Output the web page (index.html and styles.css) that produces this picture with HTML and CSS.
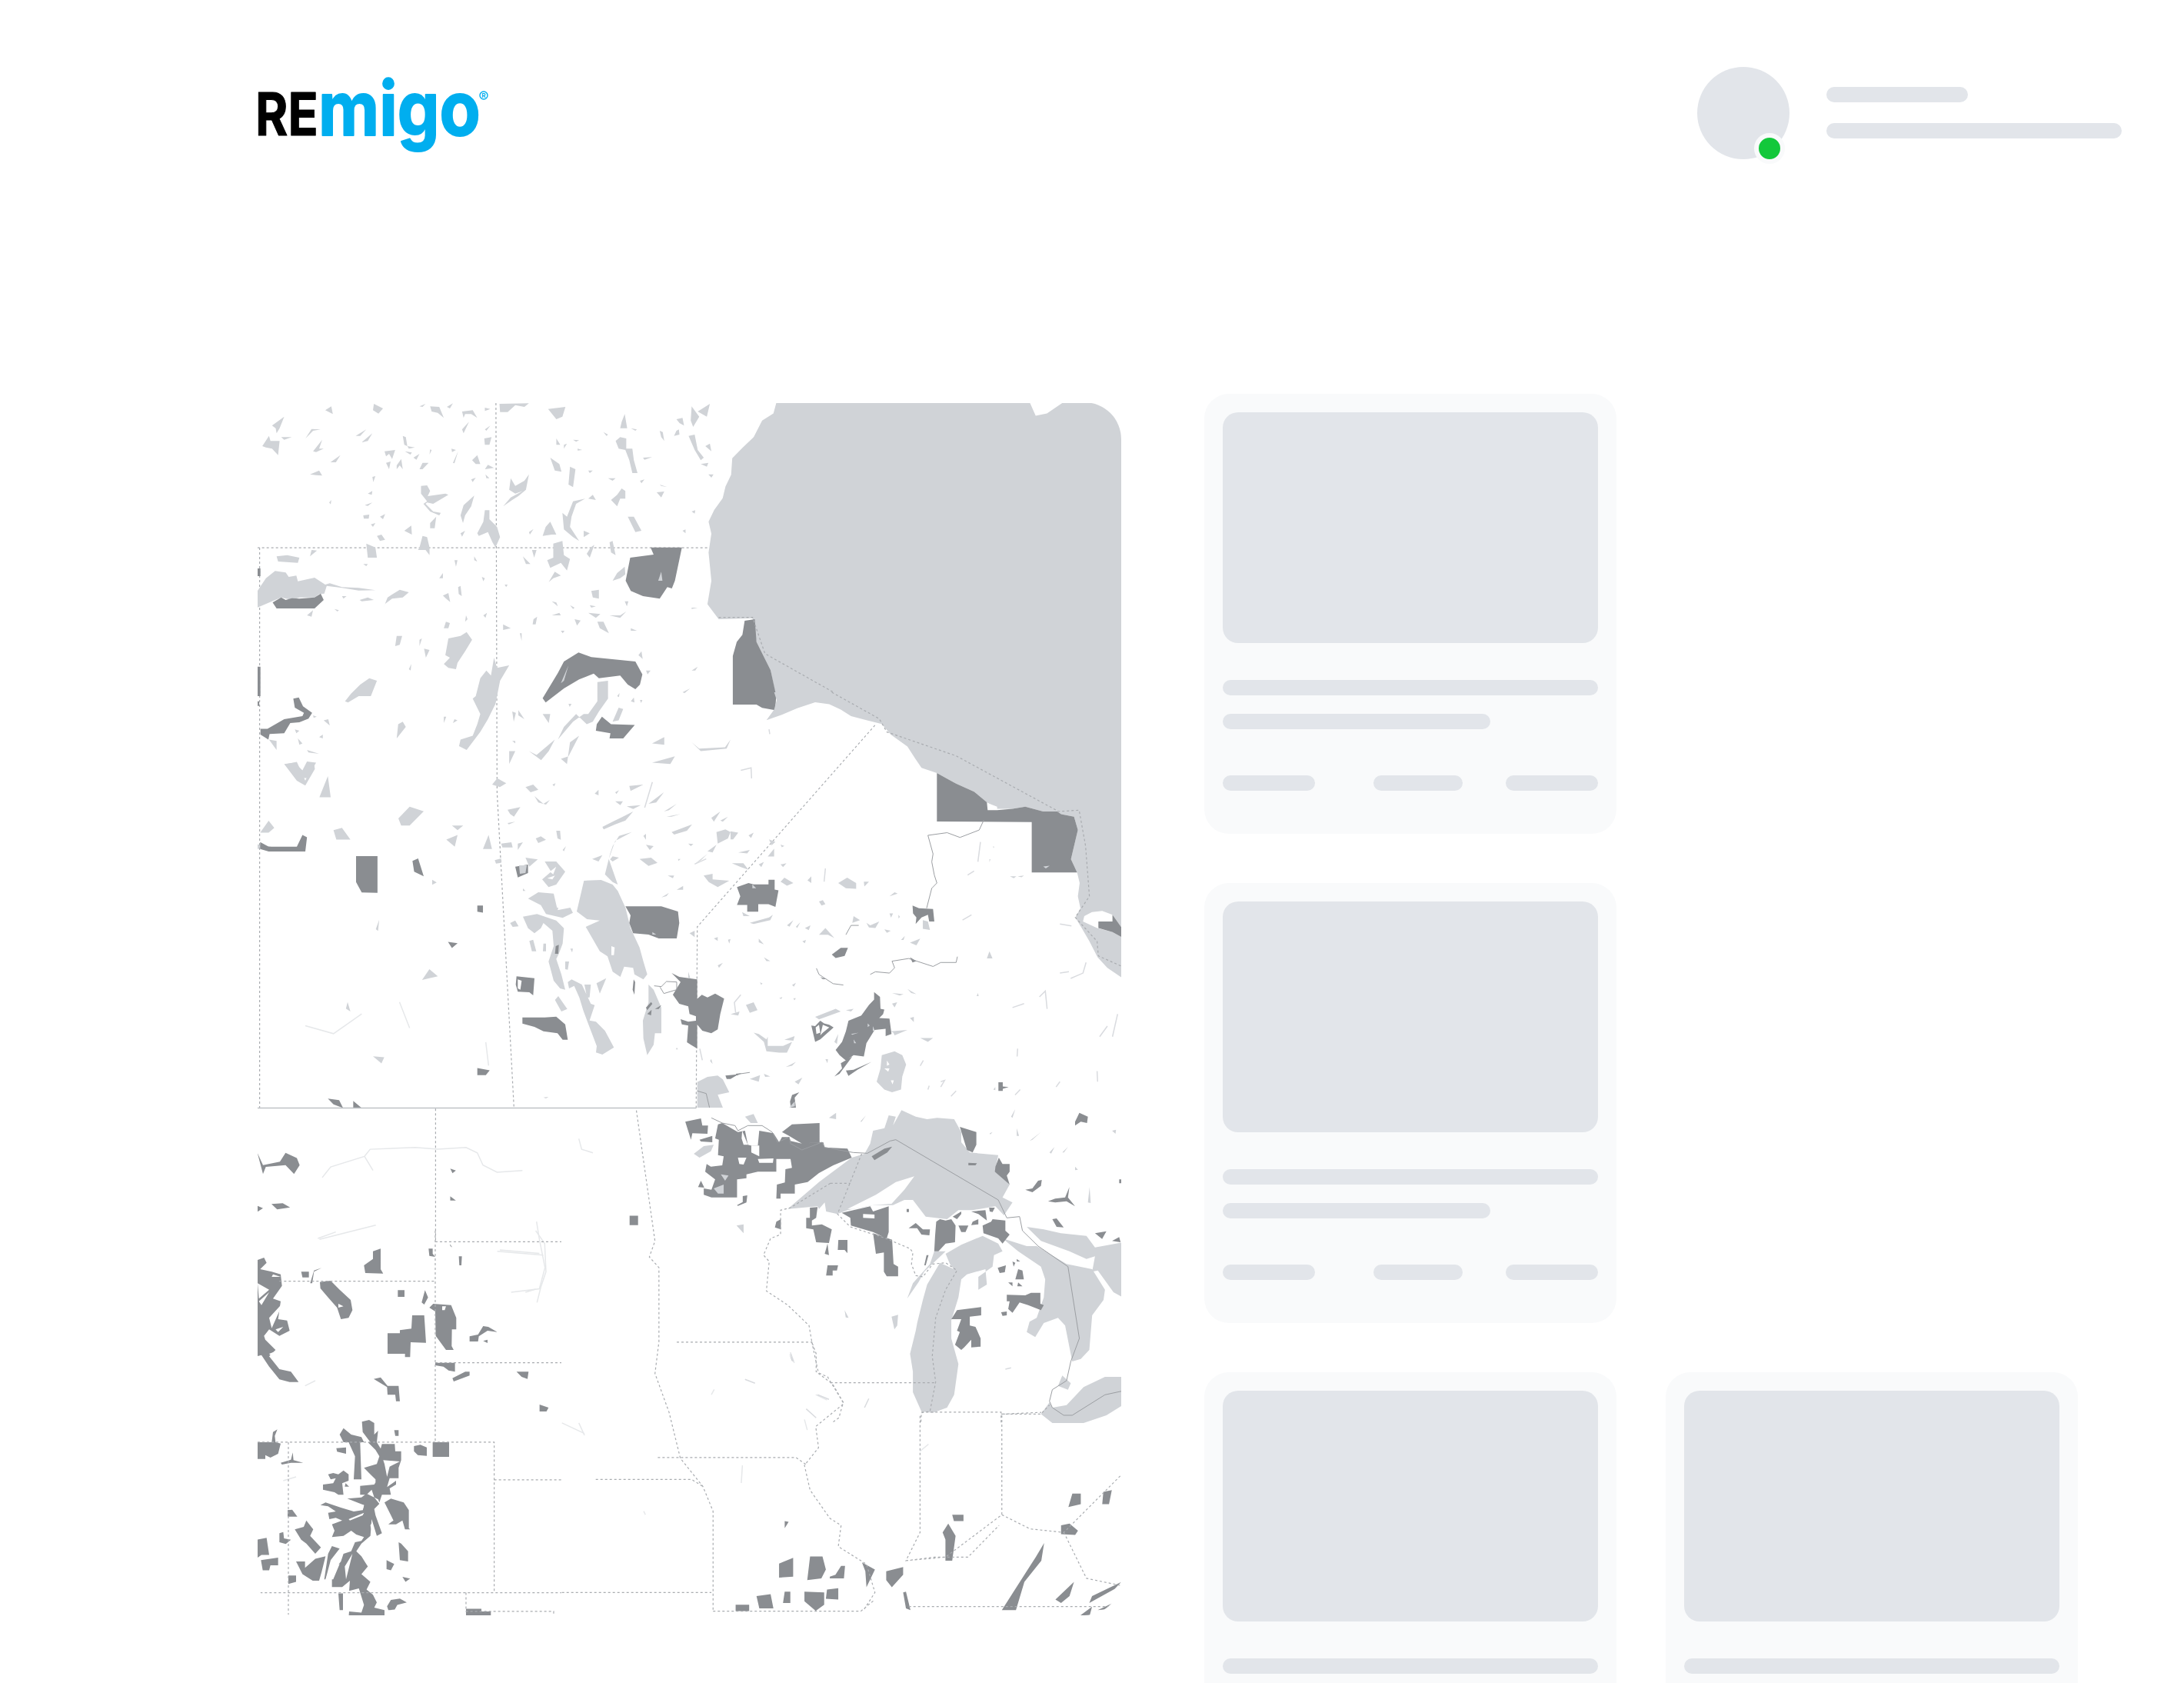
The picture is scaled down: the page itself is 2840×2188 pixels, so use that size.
FILE: index.html
```html
<!DOCTYPE html>
<html lang="en">
<head>
<meta charset="utf-8">
<title>Remigo</title>
<link rel="stylesheet" href="styles.css">
</head>
<body>
<header class="header">
  <svg class="logo" viewBox="0 0 300 100" width="300" height="100" role="img" aria-label="REmigo">
    <text class="logo-re" transform="translate(-3 79) scale(.84 1)">RE</text>
    <text class="logo-migo" transform="translate(79 79) scale(.885 1)">migo</text>
    <circle class="logo-reg" cx="294" cy="27" r="5"/>
    <text class="logo-r" x="294" y="30">R</text>
  </svg>
  <div class="profile">
    <div class="avatar"><span class="status"></span></div>
    <div class="profile-lines">
      <div class="bar bar-name"></div>
      <div class="bar bar-mail"></div>
    </div>
  </div>
</header>
<main class="main">
  <svg class="map" viewBox="335 523 1123 1577" width="1123" height="1577" aria-hidden="true">
    <g transform="translate(320 510) scale(.7334 .6122)">
      <path class="lake" d="M940,23L935,45L915,60L900,95L880,118L862,140L860,175L850,200L845,225L830,250L820,275L825,300L820,340L825,400L818,450L838,482L898,480L905,530L930,590L940,650L1553,650L1553,23L1447,23L1420,45L1400,50L1390,23Z"/>
      <path class="lake" d="M68,790L90,785L105,825L120,785L122,800L105,835L90,825ZM130,860L145,815L150,860ZM25,935l15,-25l10,15l-10,10zM20,960L45,965L20,970ZM155,930l15,-5l15,25l-25,0zM270,905L290,880L315,890L290,920L275,920ZM355,950L375,940L370,965ZM365,920L385,920L375,930ZM420,970L430,940L436,970ZM325,1225L340,1240L312,1248ZM225,1410L245,1412L240,1425ZM180,1295l5,20l-8,-6zM330,1035l8,6l-8,5zM230,1140l6,-20l-2,24z"/>
      <path class="faint" d="M105,1345L155,1362L205,1320M272,1295L290,1350M425,1380L430,1430"/>
      <path class="dark" d="M884,485L902,482L905,530L930,590L940,645L938,675L915,670L905,663L863,663L863,560L870,530L880,515ZM195,985L233,985L233,1063L205,1062L195,1040ZM295,995L305,990L315,1028L298,1018ZM410,1090L420,1090L420,1105L410,1103ZM358,1167L375,1170L365,1180ZM25,955L40,965L90,965L100,940L108,945L105,975L40,975L25,970ZM410,1435L432,1440L425,1450L410,1450ZM145,1500L165,1503L172,1520L155,1512ZM190,1505L205,1520L190,1520Z"/>
      <path class="dash" d="M838,478L898,478L920,555L1040,636M1115,707L800,1135L798,1520M20,330L820,330M24,330L24,1520M443,23L445,850L475,1520"/>
      <path class="line" d="M20,1520L798,1520"/>
    </g>
    <g transform="translate(330 515) scale(.3954 .3333)">
      <path class="lake" d="M12,760L40,710L70,682L105,688L115,705L140,700L145,722L200,708L235,735L250,730L290,745L345,748L400,757L345,758L290,748L240,740L232,770L215,772L200,785L150,785L125,795L90,785L60,800L12,825ZM60,115L100,80L85,125L75,145L72,125ZM28,195L50,155L55,175L85,175L80,230L60,205L40,200ZM90,160L125,160L100,170ZM170,165L190,128L220,130L195,135ZM195,215L225,170L215,205L230,205L205,218ZM335,155L370,130L350,155ZM355,180L390,145L375,175ZM252,258L285,230L270,258ZM185,305L215,290L225,310L205,308ZM235,55L255,40L260,70ZM395,30L425,48L410,68L392,55ZM545,40L565,30L555,42ZM580,40L610,42L625,85L605,65L585,60ZM635,42L655,28L645,48ZM685,60L720,55L735,85L715,70L695,70L690,85ZM685,130L708,100L690,145ZM760,45L778,50L760,58ZM760,130L778,115L765,135ZM758,165L782,160L775,190L760,190ZM490,155L500,160L505,195L495,190ZM505,195L530,200L510,205ZM497,215L520,220L515,228ZM430,215L465,210L455,245L445,225L435,235ZM525,240L545,225L535,248ZM470,270L485,245L490,285L480,270L470,285ZM435,260L450,255L445,285ZM545,285L555,260L575,260L555,285ZM655,260L672,215L660,262ZM650,205L665,210L652,218ZM718,250L735,230L745,265L730,265ZM580,208L585,210L578,228ZM760,285L770,268L790,280ZM762,305L775,320L765,320ZM715,325L730,318L720,335ZM390,315L400,312L393,335ZM375,380L390,370L388,385ZM365,425L390,415L375,428ZM360,465L380,462L378,478L362,478ZM385,500L400,495L392,510ZM495,525L518,505L520,540ZM405,545L420,540L432,560L415,565ZM545,590L555,545L570,550L578,590L578,620L565,600L540,600ZM248,415L255,405L253,422ZM580,495L600,470L595,515L580,515ZM415,470L432,460L425,480ZM550,350L570,348L580,370L572,390L630,380L640,385L590,420L570,415L565,420L590,450L615,455L610,465L580,450L558,420L570,410L550,380ZM680,465L690,425L725,388L715,430L695,465L688,495ZM735,535L755,490L760,445L775,445L775,480L800,510L810,550L795,590L785,570L770,530L740,545ZM680,535L695,525L685,548ZM808,30L905,28L890,42L860,35L835,62L810,62ZM968,50L1025,42L1015,80L995,90ZM1210,100L1220,70L1228,125L1205,125ZM1390,90L1410,85L1415,115L1400,105ZM1440,40L1465,80L1445,120L1437,95ZM1460,60L1500,30L1490,80ZM1390,135L1398,130L1400,150L1382,155ZM1150,140L1165,150L1160,155ZM1240,125L1260,130L1255,135ZM1335,135L1345,140L1350,175L1340,160ZM1190,175L1205,160L1225,165L1225,205L1245,205L1250,250L1262,300L1245,300L1235,250L1222,210L1200,205ZM1430,155L1450,150L1460,210L1480,240L1470,250L1450,210ZM1485,195L1500,185L1505,215ZM1470,265L1495,260L1490,275ZM975,240L1005,265L1012,295L990,290ZM1040,275L1058,285L1050,355L1035,345ZM1065,205L1080,210L1065,212ZM1020,190L1030,185L1020,205ZM995,165L1008,190L995,190ZM1050,170L1070,172L1060,178ZM1280,240L1310,238L1285,248ZM1100,290L1115,290L1105,300ZM1165,320L1190,320L1180,330ZM1270,330L1285,325L1275,340ZM1495,305L1512,305L1505,318ZM1325,375L1350,372L1340,395ZM1335,345L1360,355L1340,350ZM845,320L860,350L890,330L905,305L895,365L870,390L850,405L820,430L845,395L885,370L860,380L840,365ZM1050,410L1090,400L1060,420L1045,470L1040,510L1070,565L1050,550L1020,520L1015,455L1030,470ZM1100,400L1115,385L1125,405ZM1195,385L1210,360L1222,370L1222,400L1205,400L1195,430L1175,405ZM1085,525L1105,535L1085,550ZM905,530L920,518L908,540ZM960,510L975,490L995,540L980,540L950,545ZM985,575L1015,565L1020,620L1040,635L1030,680L1010,650L975,670L965,640L985,630ZM1170,570L1180,565L1190,620L1175,610ZM1230,470L1250,470L1275,525L1255,530ZM1410,525L1420,520L1420,535ZM1440,450L1452,445L1450,458ZM1108,590L1120,580L1105,630L1095,615ZM885,625L910,655L895,655ZM915,600L930,600L922,630ZM1195,690L1220,665L1222,695L1205,710L1180,720ZM970,725L990,685L1010,700L985,710ZM1110,760L1135,755L1135,790L1115,785ZM825,735l10,0l-5,10zM750,705l10,5l-5,12zM610,710l12,-20l0,20zM672,745l8,-5l4,40l-10,-8zM622,778l18,-10l6,35l-15,-15zM425,830L440,785L480,755L510,765L490,785L455,790L432,810ZM348,795L375,785L395,795L355,800ZM290,780l15,0l-10,10zM265,830l15,5l-5,5zM175,855l20,-20l-5,25zM75,625L110,620L150,630L145,650L80,645ZM190,600L208,602L185,625ZM370,575L400,590L405,630L375,630ZM360,655l15,0l-5,8zM725,625l10,20l-10,-5zM660,640l10,0l-5,25zM632,880L645,885L640,905L625,905ZM698,855l5,15l-8,10zM755,855l12,-10l-5,20zM820,890L845,905L820,912ZM470,935L488,935L480,970L465,975ZM640,945L680,935L700,920L718,950L695,995L670,1040L665,1065L640,1060L625,1045L645,1020L630,1010ZM545,950l8,-5l-8,30zM560,985l18,5l-12,30zM300,1190L320,1160L350,1125L380,1100L405,1110L385,1170L345,1170L310,1195ZM510,1065l8,-20l-2,25zM730,1170L745,1100L765,1070L780,1090L790,1020L800,1060L840,1050L810,1110L795,1200L770,1260L745,1310L700,1380L675,1365L680,1340L720,1325L735,1280L745,1240L720,1180ZM1130,1115L1165,1110L1165,1180L1135,1230L1115,1270L1095,1280L1060,1240L1020,1290L1000,1340L1050,1270L1085,1240L1100,1240L1130,1190ZM1200,1215L1215,1220L1200,1265L1180,1270ZM950,1240L975,1240L970,1275ZM850,1230L862,1235L855,1270ZM870,1225L890,1260L870,1245ZM1440,1350L1465,1375L1550,1370L1568,1340L1555,1375L1470,1385ZM1310,1355L1350,1330L1350,1360ZM1310,1430L1385,1405L1370,1435ZM905,1385L930,1400L990,1340L970,1385L945,1420ZM1010,1415L1035,1405L1070,1325L1040,1350L1030,1435ZM840,1385L860,1385L840,1435ZM100,1435L135,1430L160,1460L175,1425L205,1430L175,1490L150,1490ZM50,1340L75,1345L75,1380ZM145,1335L160,1355L150,1360ZM175,1380L215,1395L180,1390ZM230,1265l15,-5l5,25zM135,1300l15,5l-10,10zM195,1245l12,5l-10,5zM215,1330l12,-10l0,15zM475,1280l15,-10l10,20l-30,45zM625,1250l8,0l-8,25zM660,1260l10,5l-15,10zM850,1345l10,0l0,10zM980,800l15,5l5,15zM1040,815l15,10l-5,5zM1080,815l8,15zM1105,815l20,5l-15,5zM1100,845l40,5l-15,15zM1170,855l35,0l20,-15l-20,25zM920,870l12,-10l-5,30l-10,0zM1055,870l20,5l-12,20zM1130,880l20,0l18,45l-30,-20zM1010,915l12,0l-6,10zM980,855l25,-10l5,10zM875,925l6,0l0,30zM1240,905l20,10l-20,0zM1440,825l20,0l-20,5zM1220,800l12,0l-5,20zM1265,1010l10,-15l4,30zM1290,1070l15,0l-10,15zM1440,1070l20,-15l-8,15zM1410,1155l25,-15l-18,18zM1195,1170l8,-12l-2,16zM1240,1190l10,-15l2,20zM1270,1185l8,0l-4,12zM1035,1200l10,0l-6,12z"/>
      <path class="dark" d="M1238,630L1315,618L1305,590L1408,590L1385,720L1375,750L1360,745L1335,790L1280,780L1240,760L1223,720ZM62,805L90,785L105,795L125,788L150,790L200,785L220,770L230,795L200,828L75,828ZM950,1178L1000,1080L1020,1035L1068,1000L1110,1018L1255,1035L1278,1085L1270,1125L1255,1143L1230,1125L1205,1090L1135,1100L1118,1082L1070,1105L1020,1140L960,1195ZM1145,1250L1175,1280L1253,1283L1215,1335L1170,1335L1173,1315L1125,1305L1128,1280ZM130,1180L148,1175L162,1210L192,1235L180,1258L150,1272L120,1275L100,1315L52,1318L48,1340L22,1320L22,1298L45,1298L100,1260L160,1248L165,1235L135,1215ZM10,672h12v30h-12zM10,1055h12v115h-12zM10,1190h8v18h-8z"/>
      <path class="lake" d="M1010,1120L1035,1050L1020,1110ZM1330,720l10,-35l4,35z"/>
    </g>
    <g transform="translate(950 900) scale(.3333 .3444)">
      <path class="lake" d="M170,0L180,30L170,65L140,105L200,85L260,60L330,38L385,45L430,65L470,90L530,105L590,120L625,160L690,205L720,250L745,285L805,305L880,345L950,375L1000,415L1040,440L1100,440L1150,432L1220,450L1275,450L1290,460L1340,470L1355,520L1328,630L1352,680L1362,720L1355,770L1365,815L1345,850L1370,890L1400,940L1432,1000L1470,1040L1527,1078L1527,925L1490,905L1430,890L1375,865L1380,845L1410,830L1450,825L1490,840L1527,890L1527,0ZM1000,1005L1010,978L1022,1005ZM420,720L455,700L490,720L490,742L450,740ZM195,715L210,700L245,720L220,730ZM345,790L360,785L370,800L355,805ZM300,710L315,695L315,720ZM345,915L370,890L405,928L380,915ZM530,870L545,880L580,865L565,890L540,888ZM290,890L312,880L305,898ZM220,880L245,860L230,885ZM255,885L272,868L260,890ZM600,895L625,900L610,908ZM750,860L770,865L778,897L750,893ZM700,945L740,930L725,955ZM665,935L680,920L675,935ZM475,870L480,845L505,860ZM70,540L90,530L80,550ZM150,555L175,565L160,578ZM145,620L170,590L170,620ZM195,575L210,580L200,585ZM110,650L130,640L120,660ZM195,650L218,645L205,660ZM5,645L50,645L70,670L40,660ZM30,605L75,595L65,608ZM0,525L30,530L10,555L0,555ZM965,1135l3,12l-8,0zM45,830L75,845L50,845ZM75,870L150,850L165,840L155,860L90,875ZM330,1225L410,1195L430,1205L345,1235ZM450,1200L480,1195L470,1205ZM60,1180L90,1170L105,1200L75,1210ZM0,1215L35,1205L30,1220ZM90,1285L110,1290L140,1310L145,1300L145,1335L205,1335L240,1320L220,1360L190,1360L140,1355L130,1320ZM210,1312L250,1298L245,1315ZM630,1175L650,1170L640,1190ZM630,1135L675,1140L660,1145ZM690,1120L725,1140L705,1135ZM700,1230L715,1225L715,1245ZM625,1280L690,1275L640,1295L635,1285ZM740,1305L790,1305L770,1320ZM590,1370L640,1355L670,1370L685,1405L670,1450L665,1500L630,1510L600,1500L570,1470L585,1420ZM215,1415L255,1395L240,1410ZM370,1385L380,1385L378,1400ZM250,1470L280,1455L265,1480ZM75,1460L115,1445L110,1470ZM130,1440L155,1450L135,1452ZM405,1320L420,1290L415,1328ZM1090,695L1115,695L1105,702ZM1120,695L1145,692L1135,698ZM520,715l20,0l-18,18zM620,770l20,-15l12,5zM280,940l14,-5l-4,12zM110,930l20,22l-20,-8zM130,1000l25,15l-15,0zM240,1105l15,-8l-8,14zM245,1155l10,0l-6,8zM190,1155l12,-5l-4,8zM115,1095l10,5l-6,4zM1025,580l4,4l-4,4zM1010,630l4,0l-4,12zM620,835l14,0l-8,16zM655,840l6,8l-6,6zM1025,1500l8,-10l0,12z"/>
      <path class="thin" d="M1327,1080L1375,1060L1387,1020M1285,875L1330,882M905,860L940,840M965,640L975,565M925,690L950,675M1120,1345L1118,1375M1205,1150L1228,1128L1235,1195M1100,1190L1145,1175M1440,1300L1470,1260M1490,1300L1510,1215M1430,1430L1432,1470M1285,1060L1320,1055M370,665L365,715M40,295L80,285L82,325M150,140L153,158M820,1470L835,1465L820,1490M860,1525L880,1505M770,1500L775,1485M740,1410L752,1390M1270,1490L1285,1470M1110,1520L1130,1500"/>
      <path class="paper" d="M610,1390l10,15l-10,5zM600,1420l20,0l-5,12zM625,1465l12,0l-5,15zM1003,418L1040,432L1040,445L1003,445Z"/>
      <path class="dark" d="M805,305L880,345L950,375L1000,415L1003,445L1040,445L1100,440L1150,432L1220,450L1275,450L1290,460L1340,470L1355,520L1328,630L1352,680L1175,680L1175,490L805,488ZM1435,865L1490,865L1490,840L1527,890L1527,925L1490,905L1435,890ZM1045,1472L1062,1472L1062,1488L1085,1490L1062,1497L1062,1505L1045,1505ZM710,805L735,815L790,818L795,865L775,865L770,840L745,850L722,875L725,850L712,835ZM395,990L430,965L458,965L445,995L410,1003ZM25,735L70,720L90,725L148,725L148,708L172,708L172,745L187,748L175,810L148,800L108,800L108,828L65,828L65,803L25,803L38,770ZM560,1132L583,1150L585,1195L600,1198L595,1215L580,1230L620,1232L628,1290L605,1298L605,1270L562,1275L530,1325L520,1375L480,1370L450,1390L425,1370L410,1350L435,1320L450,1280L460,1240L510,1220L540,1180L560,1160ZM315,1258L330,1260L350,1240L365,1250L385,1255L402,1265L350,1310L330,1320ZM450,1428L480,1425L550,1395L495,1425L460,1448ZM405,1450L435,1420L430,1400L475,1375L425,1440ZM232,1545L240,1520L268,1510L250,1530L255,1568L235,1568ZM350,1075l25,8l-15,0zM700,1000l25,15l-15,5zM20,1440L45,1437L25,1447Z"/>
      <path class="paper" d="M332,1265L345,1255L350,1285L335,1290ZM360,1255L385,1265L360,1285L350,1295Z"/>
      <path class="lake" d="M85,725l15,15l-15,0zM555,1260l8,18l-8,0zM470,1290l30,-5l-25,8zM480,1310l10,15l-8,0zM535,1250l8,8l-8,6zM1220,658l25,-3l-15,10z"/>
      <path class="river" d="M988,482L970,520L895,548L845,530L770,540L790,610L785,640L795,690L805,720L785,740L765,815M335,1042L345,1065L400,1100L440,1105M545,1065L565,1055L620,1060L640,1040L630,1015L695,1005L790,1035L820,1020L880,1020L885,998M450,915L470,880L500,880M0,1450L40,1440L75,1435"/>
      <path class="dash" d="M395,0L580,100L610,150L880,240L1280,450L1360,445L1385,580L1400,770L1345,850L1430,940L1435,995L1527,1035"/>
    </g>
    <g transform="translate(640 1010) scale(.3333)">
      <path class="lake" d="M358,405L425,402L470,420L490,445L520,510L540,590L575,665L590,720L605,770L590,790L555,770L550,745L515,740L500,780L470,760L450,700L420,680L365,585L420,560L370,555L330,525ZM440,380L460,300L470,270L495,230L545,215L480,250L455,320L490,420L470,410ZM140,475L180,450L240,455L255,520L305,510L315,530L275,550L210,535L190,500ZM120,545L175,535L250,560L280,590L275,650L260,690L250,710L270,770L285,830L265,825L240,795L220,720L240,660L235,600L200,570L190,590L165,610L140,590ZM70,570L90,560L103,583L80,585ZM145,640L160,635L172,680L155,680ZM200,650L210,650L210,680L198,680ZM285,720L300,720L295,752L285,750ZM305,670L315,670L312,685ZM295,800L310,790L350,810L385,885L400,890L380,950L405,955L440,990L475,1055L430,1083L405,1075L408,1050L370,950L355,910L340,860L320,815L300,825ZM245,870L258,855L293,905L270,915ZM407,805L445,785L420,845ZM360,810L385,810L380,860L370,860ZM610,810L630,830L660,900L660,1000L635,1000L630,1045L605,1085L590,1020L588,950L610,880ZM205,330L250,330L285,370L250,420L220,430L195,400L230,370ZM130,315L178,322L145,350ZM60,128L110,118L85,155L70,145ZM170,240L190,232L210,245L180,258ZM250,210L265,210L268,245L255,240ZM35,260L75,255L80,275L40,275ZM100,260L120,255L100,285ZM275,285L288,270L280,290ZM10,325L35,318L35,335L15,338ZM0,30L20,5L55,25L30,40ZM130,40L160,30L180,50L150,60ZM165,75L200,105L225,90L210,108L180,100ZM400,65L415,50L415,72ZM235,30l12,-5l-5,12zM430,195L470,175L510,155L550,135L520,170L480,185L435,205ZM575,320L620,315L645,335L610,347ZM390,320L430,305L415,330ZM470,310L495,315L470,330L460,322ZM535,35L590,30L540,55ZM480,95L510,95L500,110ZM525,115L580,110L550,125ZM610,105L670,60L640,100ZM670,135L720,105L690,130ZM680,155L735,145L700,155ZM855,160L890,135L865,175ZM890,170L920,155L900,175ZM700,215L780,185L760,210L710,225ZM875,215L910,205L930,215L920,240L880,260ZM840,290L875,265L860,295ZM685,385L710,385L705,395ZM825,385L860,378L860,400L925,405L880,430L845,410ZM660,470L690,452L680,465ZM720,440L745,425L745,440ZM800,1190L840,1170L880,1165L900,1180L925,1230L880,1240L900,1290L800,1290ZM770,610L790,600L790,625ZM865,630L880,625L880,640ZM920,635L930,632L925,650ZM880,735L900,725L885,745ZM590,230L600,222L600,245ZM600,265L630,270L615,285ZM790,340L840,300L815,325ZM765,260L785,262L775,270ZM60,180l30,-5l-25,10zM480,60l15,-8l-10,15zM725,320l10,0l-8,8zM120,435l10,10l-10,0zM250,510l8,0l-3,12zM855,1100l5,20l-10,-12zM720,1055l5,8l-8,0zM515,1045l5,12zM200,1250l20,-2l-10,6zM840,860l4,8l-6,0z"/>
      <path class="thin" d="M625,20L595,120M790,340L835,320M970,850L945,880L950,920M810,1060L820,1105"/>
      <path class="paper" d="M465,660L478,665L475,695L465,695ZM225,370l25,-20l-12,30zM215,395l30,-10l-10,15z"/>
      <path class="dark" d="M520,505L660,505L725,525L730,570L720,630L650,630L610,615L550,610L535,570L540,540ZM95,778L165,785L160,852L145,840L100,838L92,810ZM118,938L205,938L250,935L285,965L295,1025L275,1025L255,1000L200,992L165,975L118,962ZM700,765L730,780L800,790L800,935L770,925L765,895L730,885L705,850L720,825L735,800ZM735,945L765,955L800,950L800,1060L775,1045L760,1035L765,970L740,965ZM795,870L818,850L840,860L870,845L905,865L890,925L880,985L855,1000L820,990L795,960ZM552,790L558,800L555,850L548,830ZM248,660L260,655L258,690L245,690ZM600,900L620,878L625,885L605,910ZM605,925L622,908L620,930ZM635,905L660,890L650,905ZM90,350L140,342L140,375L100,392ZM910,1165L960,1160L930,1178L915,1178Z"/>
      <path class="paper" d="M100,790L115,795L110,830L100,825Z"/>
      <path class="lake" d="M105,345L135,345L130,375L108,378ZM625,605l15,10l-15,0zM765,760l8,25l-8,0z"/>
      <path class="river" d="M632,815L660,818L680,798L720,800L720,830L670,845L655,820M800,1225L835,1235L848,1290"/>
    </g>
    <g transform="translate(320 1400) scale(.7334 .4591)">
      <path class="faint" d="M135,285L150,255L210,225L225,265M210,225L220,205L300,200L340,205L390,200L410,215L420,250L445,270L490,265M590,175L595,205L615,215M130,460L230,420M515,410L520,460L530,540L520,600L470,610M450,490L520,500M965,780L972,810M825,900L830,885M1010,900L1030,915M560,980L600,1010M990,970L995,1000M590,980L600,1015M880,1100L878,1150M705,1230L708,1240M1195,1060L1210,1040"/>
      <path class="dark" d="M20,215L30,250L60,240L70,215L90,230L95,250L85,275L70,250L35,255L30,275ZM45,360L65,358L78,370L55,375ZM20,365L30,372L20,382ZM362,260l10,5l-6,8zM362,338L372,350L362,350ZM680,393H695V420H680ZM955,1258L962,1260L955,1278ZM1252,1240H1272V1258H1255ZM1235,1290L1245,1265L1258,1300L1252,1370L1240,1370L1240,1310ZM945,1378L970,1362L970,1415L945,1418ZM1000,1358H1022L1028,1395L1020,1420L995,1425ZM1035,1415L1045,1410L1055,1385L1062,1385L1060,1420L1035,1420ZM1092,1375L1115,1395L1100,1445L1098,1400ZM1135,1400L1165,1388L1165,1410L1145,1445L1135,1425ZM955,1458H965V1490H952ZM905,1470L930,1465L935,1505L910,1505ZM990,1458L1025,1460L1025,1495L1010,1512L990,1485ZM1030,1452L1050,1448L1050,1480L1028,1478ZM868,1495H892V1513H868ZM1165,1460L1170,1458L1178,1510L1170,1505ZM1340,1510L1360,1460L1400,1360L1415,1320L1410,1370L1380,1430L1365,1510ZM1445,1270L1460,1265L1475,1285L1470,1297L1445,1295ZM1465,1180L1480,1180L1480,1210L1458,1218ZM1520,1175L1535,1170L1530,1210L1518,1210ZM1435,1480L1468,1430L1460,1470L1445,1490ZM1500,1470L1552,1430L1540,1450L1495,1490ZM1475,1530L1500,1500L1495,1530ZM1510,1510L1550,1480L1540,1505Z"/>
      <path class="dash" d="M336,90V465M692,95L725,465L715,510L732,540L732,750L725,840L750,950L770,1080L810,1160L828,1230V1510M1003,750L1015,840L1040,870L1060,925L1010,990L1015,1050L990,1100L1000,1170L1035,1250L1055,1270L1050,1330L1100,1380L1115,1460L1095,1510M620,1140H790L810,1160M730,1078H975L995,1100M1195,960V1290L1170,1370L1240,1360L1340,1240V955L1410,950M1340,1240L1390,1280L1450,1290L1550,1130M1170,1370L1220,1360L1280,1360L1335,1270M1450,1290L1490,1420L1550,1440M1175,1500H1530M828,1513H1090L1115,1480M560,1460H825"/>
    </g>
    <g transform="translate(880 1430) scale(.37 .3333)">
      <path class="lake" d="M390,425L500,320L615,225L660,210L680,170L690,120L730,110L745,60L770,65L760,100L790,40L840,65L880,75L915,70L975,75L1000,125L1000,165L1030,205L1130,215L1120,270L1170,330L1145,380L1180,400L1150,450L1120,415L1040,430L990,430L950,465L875,455L830,390L800,390L760,410L690,410L620,425L600,430L565,445L525,435L520,400L500,425L495,415ZM845,870L865,780L880,720L925,635L985,665L1000,700L990,770L965,860L965,930L990,1030L975,1150L950,1200L900,1220L860,1215L830,1140L830,1060L820,990L840,900ZM810,775L830,715L890,640L905,590L945,590L870,670L850,710ZM945,600L1000,565L1075,530L1130,560L1145,590L1115,605L1110,650L1060,690L1060,740L1090,720L1085,660L1020,680L1000,700L960,640ZM1145,540L1230,570L1265,570L1370,640L1460,660L1505,740L1500,780L1460,840L1450,975L1420,1010L1390,1020L1365,880L1340,850L1290,870L1260,925L1230,905L1240,865L1265,850L1290,770L1295,700L1280,650L1200,590ZM1230,495L1290,505L1350,520L1440,530L1470,575L1568,555L1568,770L1535,750L1480,665L1460,670L1470,610L1440,620L1380,590L1330,570L1280,550ZM1280,1225L1310,1180L1320,1200L1370,1190L1430,1120L1505,1080L1568,1080L1568,1190L1510,1230L1430,1260L1320,1260ZM1340,1115L1355,1075L1385,1105L1375,1130ZM60,210L95,180L130,175L120,200L80,225ZM240,65L270,55L285,90L260,90ZM535,70L560,50L560,75ZM645,85L665,60L650,85ZM395,30L415,5L415,25ZM210,490L235,485L235,520ZM755,845L778,838L775,880L765,895ZM1240,160L1280,125L1250,155ZM1195,110L1203,140L1195,140ZM1175,65L1190,35L1180,70ZM1530,120l14,-4l-2,16zM1310,205l18,-22l-12,26zM1355,205l20,-22l-14,22zM1400,260l10,12l-10,2zM1445,400l6,-60l4,62zM1100,130l10,-5l-8,10zM590,820l14,30l-10,-2zM395,990l15,30l-6,-2z"/>
      <path class="thin" d="M240,1090L275,1105M495,1150L535,1168M455,1205L490,1240M660,1200L675,1165M400,990L410,1020M1155,1050L1175,1045"/>
      <path class="paper" d="M600,425L700,370L770,320L835,298L800,350L755,405L690,410L620,425Z"/>
      <path class="dark" d="M30,85L85,72L90,100L110,100L108,132L55,130L50,155L40,120ZM80,155L125,140L125,165L85,162ZM145,95L160,90L215,125L240,120L250,175L260,178L285,178L290,120L340,130L360,165L370,145L395,145L400,160L440,170L505,165L515,165L520,185L600,190L615,225L550,255L500,285L460,320L415,330L415,365L365,365L365,385L350,385L352,330L380,322L382,270L405,265L400,230L350,230L350,280L285,280L245,290L245,305L212,310L212,380L122,380L95,370L95,345L122,350L135,310L100,280L105,250L120,260L160,255L165,220L145,215L148,155L135,150ZM370,125L405,95L502,90L502,165L440,170L395,140ZM212,410L232,398L232,375L248,372L245,400L215,413ZM85,315L97,342L75,340ZM350,475L366,465L366,505L345,497ZM685,220L730,190L757,182L740,205L695,235ZM580,440L680,415L690,435L745,415L745,515L738,540L690,515L612,490L610,460ZM468,420L495,418L490,460L475,470L475,490L510,485L545,505L535,558L490,555L480,505L455,500L455,460L468,460ZM690,520L757,545L762,640L778,650L778,688L738,688L728,670L728,595L700,600ZM568,546L600,546L600,598L590,585L566,585ZM530,560L535,605L520,600ZM530,645L567,645L563,665L548,665L548,685L525,685ZM995,105L1053,125L1053,175L1040,205L1020,195ZM1025,245L1055,247L1050,255L1025,255ZM1132,225L1145,250L1170,250L1170,280L1160,295L1170,330L1118,280L1120,260ZM1225,350L1250,345L1270,315L1283,312L1280,335L1250,360ZM1305,395L1330,385L1365,380L1380,340L1375,380L1400,415L1370,395L1330,400ZM1400,85L1415,50L1445,65L1442,90L1420,85L1400,100ZM1320,465L1335,462L1360,497L1335,495ZM1470,520L1510,512L1495,542ZM1530,550L1555,535L1560,555ZM1555,310l10,0v15h-10zM808,425l8,0v12h-8zM815,500L840,480L865,505L890,505L888,528L860,525L845,500ZM912,475L925,465L945,470L965,465L980,490L978,555L945,560L920,590L905,590L908,530ZM990,490L1025,490L1015,515L1000,515ZM970,455L1000,435L1000,445L985,465ZM1035,435L1085,430L1090,470L1060,445ZM1098,420L1118,420L1110,437L1100,435ZM1075,490L1105,475L1110,465L1155,470L1155,510L1170,525L1145,560L1130,540L1078,520ZM1040,475L1060,465L1060,485L1035,488ZM870,645L878,605L885,605L875,645ZM1128,655L1157,645L1153,672L1135,675ZM1180,630l10,5l-6,15zM1195,620l12,10l-12,0zM1200,660L1215,665L1220,700L1190,700ZM1165,712l15,0l0,15zM1200,712l15,15l-18,0zM1160,760L1225,762L1245,752L1278,752L1278,795L1290,800L1280,820L1235,800L1205,790L1180,830L1165,815L1170,785L1160,785ZM1140,828L1160,825L1160,840L1145,842ZM985,820L1070,808L1070,840L1030,845L1030,880L1050,885L1068,930L1068,962L1035,965L1035,935L1010,965L1000,975L978,955L995,905L985,900L1000,855L965,855Z"/>
      <path class="paper" d="M262,178L290,178L290,220L262,205ZM215,225L245,225L235,252L220,250ZM285,230L340,228L338,245L290,245ZM255,128L285,125L282,145L260,145ZM230,120L250,175L235,175L228,150ZM655,445L695,447L695,462L655,460Z"/>
      <path class="lake" d="M130,345L165,330L165,365L145,365ZM155,290L182,295L170,315Z"/>
      <path class="river" d="M122,70L160,90L205,100L215,120L250,100L300,100L335,125L355,165L395,145L400,170L440,195L510,165L520,185L620,205L670,208L750,160L770,155L1130,390L1160,460L1205,455L1215,510L1270,570L1375,650L1415,930L1385,1020L1370,1095L1320,1130L1310,1175L1320,1200L1360,1230L1390,1230L1505,1150L1568,1135"/>
      <path class="dash" d="M650,210L565,445L610,495L735,540L820,580L830,595L825,640L840,685L865,690L900,640L945,635L985,665L945,740L910,850L898,1000L910,1100L890,1215L860,1220L858,1260M540,325L610,325M540,325L400,420L365,430L365,525L330,540L305,605L325,630L315,745L390,800L465,880L475,945L490,990L490,1060L530,1080L585,1180L570,1240L545,1260M0,945H475M540,1103H910M860,1218H1140V1260M1140,1225H1280L1310,1190"/>
    </g>
    <g transform="translate(330 1600) scale(.3333)">
      <path class="dark" d="M12,115L40,105L50,125L25,150L70,160L105,170L110,215L75,265L105,275L95,345L130,350L140,390L100,410L60,385L40,410L45,425L85,465L60,490L100,540L145,550L175,590L140,590L100,580L60,530L30,485L12,490ZM430,135L465,110L465,80L495,70L495,150L505,167L435,165ZM185,160H215V182H190ZM220,205L235,155L265,145L235,160L228,205ZM258,200L300,195L335,230L378,270L385,310L370,340L340,345L325,300L290,260L260,225ZM562,232H588V258H562ZM655,280L668,232L680,260L665,288ZM682,70H698V90L708,102L685,98ZM800,100L812,100L810,135L802,135ZM765,52L775,65L767,60ZM522,400H570V388L615,382L618,330L665,330L668,375L672,437L612,435L610,493L590,493L590,480L522,480ZM685,300L700,285L770,290L790,340L790,385L773,385L772,450L780,465L750,465L710,410L708,315ZM842,412L875,405L895,372L915,375L950,395L912,390L878,412L875,432L842,432ZM895,430L912,425L912,438ZM708,515L785,515L785,550L760,545L740,530L708,525ZM775,575L825,550L842,550L842,565L780,588ZM1025,550L1072,550L1068,578L1045,570ZM1115,678L1150,690L1142,705L1115,705ZM468,578L495,572L522,605L565,605L570,665L555,665L552,640L522,640L520,610ZM422,745L450,738L470,750L470,795L485,780L480,825L455,825L425,785ZM548,778H565V800H552ZM335,795L350,770L380,795L420,805L430,825L350,825ZM350,825L415,825L420,970L390,970L395,880L370,825ZM322,848L360,845L360,870L325,862ZM445,825L480,825L495,850L500,832L550,832L552,860L575,860L575,895L565,925L565,965L530,965L520,1000L555,975L555,990L530,1005L535,1030L500,1030L490,1060L475,1020L475,970L455,950L430,925L480,910L490,880L475,855ZM625,840L650,835L675,845L675,878L640,875L625,860ZM698,825H762V882H698ZM12,825L70,825L75,785L92,775L82,800L85,825L105,830L95,870L65,885L45,875L45,890L12,890ZM105,905L145,893L152,865L155,895L193,905L145,905L110,912ZM290,950L310,945L330,950L350,935L370,950L370,975L345,985L350,1030L330,1030L315,1020L270,1010L270,990L310,985L320,965L300,970ZM358,985L372,998L355,998ZM415,995L470,990L485,965L500,1005L490,1050L470,1040L460,1010L440,1030L415,1030ZM365,1045L420,1040L440,1025L470,1040L490,1065L470,1085L475,1110L500,1180L480,1190L460,1125L455,1190L420,1220L400,1250L420,1270L445,1310L420,1340L455,1370L440,1400L465,1420L480,1450L470,1470L510,1480L510,1510L370,1510L372,1485L420,1490L430,1460L410,1395L372,1405L375,1365L345,1390L305,1390L305,1335L340,1290L350,1260L380,1250L395,1215L420,1210L430,1195L400,1185L380,1170L350,1190L305,1195L315,1170L305,1145L345,1130L320,1120L295,1125L290,1100L320,1095L290,1075L260,1070L280,1060L340,1080L390,1095L425,1090L430,1070L380,1060ZM510,1060L535,1045L585,1060L605,1090L605,1160L610,1165L590,1165L580,1130L555,1145L525,1145L545,1130L525,1090ZM132,1090L150,1088L170,1115L132,1115ZM100,1180L115,1175L118,1200L145,1205L125,1222L100,1215ZM160,1165L195,1155L205,1130L232,1165L220,1190L262,1235L240,1260L205,1220L185,1205ZM12,1205L50,1198L60,1265L30,1265L15,1275ZM28,1285L95,1275L95,1305L65,1305L60,1325L35,1325ZM165,1290L200,1290L200,1315L240,1280L280,1270L265,1330L255,1365L230,1365L190,1340ZM290,1260L305,1230L335,1240L300,1285L280,1360L275,1360ZM135,1345L165,1345L165,1370L135,1378ZM565,1215L575,1220L602,1250L602,1290L570,1285ZM518,1285L548,1300L535,1325L518,1320ZM580,1350L610,1357L592,1370ZM330,1415H348V1480H335ZM520,1465L535,1440L570,1435L597,1450L560,1460L550,1478L525,1480ZM828,1475H888V1485H925V1510H828ZM530,1500L560,1500L530,1510Z"/>
      <path class="paper" d="M15,205L60,230L20,265ZM75,170L105,180L70,180ZM20,275L60,240L30,290ZM60,340L115,280L70,380ZM85,385L115,375L95,395ZM60,480L85,470L70,490ZM330,285L350,295L330,300ZM735,295L750,295L745,310L735,310ZM505,895L570,900L530,920L520,960L510,910ZM365,1045L430,1070L425,1090L370,1065ZM370,1125L430,1100L425,1110L375,1130ZM300,1310L335,1300L310,1360L280,1360ZM355,1310L385,1260L360,1360ZM455,1150L460,1140L465,1190ZM480,1195L545,1280L535,1285Z"/>
      <path class="faint" d="M1100,0L1135,50L1140,160L1120,220L1105,280M950,80L1130,95M1060,240L1100,228M250,30L320,5M200,605L240,585M115,975L165,960"/>
      <path class="dash" d="M100,197H705M708,0V820M708,43H1200M708,515H1200M15,825H938V1412M135,825V1510M25,1412H1200M828,1412V1485H1170V1510M938,972H1200"/>
    </g>
  </svg>
  <section class="cards">
    <article class="card">
      <div class="thumb"></div>
      <div class="bar line-full"></div>
      <div class="bar line-short"></div>
      <div class="meta"><div class="bar meta-a"></div><div class="bar meta-b"></div><div class="bar meta-c"></div></div>
    </article>
    <article class="card">
      <div class="thumb"></div>
      <div class="bar line-full"></div>
      <div class="bar line-short"></div>
      <div class="meta"><div class="bar meta-a"></div><div class="bar meta-b"></div><div class="bar meta-c"></div></div>
    </article>
    <article class="card">
      <div class="thumb"></div>
      <div class="bar line-full"></div>
      <div class="bar line-short"></div>
      <div class="meta"><div class="bar meta-a"></div><div class="bar meta-b"></div><div class="bar meta-c"></div></div>
    </article>
    <article class="card card-side">
      <div class="thumb"></div>
      <div class="bar line-full"></div>
      <div class="bar line-short"></div>
      <div class="meta"><div class="bar meta-a"></div><div class="bar meta-b"></div><div class="bar meta-c"></div></div>
    </article>
  </section>
</main>
</body>
</html>
```
FILE: styles.css
```css
* { box-sizing: border-box; }
html, body { margin: 0; height: 2188px; overflow: hidden; background: #fff; }
body { font-family: Inter, sans-serif; }

.header { display: flex; justify-content: space-between; align-items: flex-start; height: 207px; padding: 87px 81px 0 335px; }
.logo { display: block; margin-top: 10px; overflow: visible; }
.logo-re, .logo-migo { font-family: Inter, sans-serif; font-weight: 700; stroke-linejoin: round; }
.logo-re { font-size: 77px; fill: #000; stroke: #000; stroke-width: 1; }
.logo-migo { font-size: 98px; fill: #00aeef; stroke: #00aeef; stroke-width: 2; }
.logo-reg { fill: none; stroke: #00aeef; stroke-width: 1.4; }
.logo-r { font-family: Inter, sans-serif; font-size: 8px; font-weight: 700; fill: #00aeef; text-anchor: middle; }

.profile { display: flex; align-items: flex-start; gap: 48px; }
.avatar { position: relative; width: 120px; height: 120px; border-radius: 50%; background: #e2e5ea; }
.status { position: absolute; left: 74px; top: 86px; width: 40px; height: 40px; border: 6px solid #f9fafb; border-radius: 50%; background: #13c83b; }
.profile-lines { display: flex; flex-direction: column; gap: 27px; padding-top: 26px; }
.bar { height: 20px; border-radius: 10px; background: #e2e5ea; }
.bar-name { width: 184px; }
.bar-mail { width: 384px; }

.main { display: flex; align-items: flex-start; margin-top: 305px; padding-left: 335px; }
.map { display: block; flex: none; margin: 11px 108px 0 0; border-radius: 48px; background: #fff; }
.lake { fill: #d0d3d7; }
.dark { fill: #8a8d91; }
.paper { fill: #fff; }
.thin { fill: none; stroke: #d9dbdf; stroke-width: 1.5; vector-effect: non-scaling-stroke; }
.faint { fill: none; stroke: #e6e8ea; stroke-width: 1.5; vector-effect: non-scaling-stroke; }
.river { fill: none; stroke: #9b9ea2; stroke-width: 1; vector-effect: non-scaling-stroke; }
.dash { fill: none; stroke: #a9acb0; stroke-width: 1.2; stroke-dasharray: 3 3; vector-effect: non-scaling-stroke; }
.line { fill: none; stroke: #bfc2c6; stroke-width: 1.6; vector-effect: non-scaling-stroke; }

.cards { display: grid; grid-template-columns: 536px 536px; gap: 64px; align-items: start; }
.card { grid-column: 1; height: 572px; padding: 24px; border-radius: 32px; background: #f9fafb; }
.card-side { grid-column: 2; grid-row: 3; }
.thumb { height: 300px; border-radius: 20px; background: #e2e5ea; }
.line-full { margin-top: 48px; }
.line-short { width: 348px; margin-top: 24px; }
.meta { display: flex; margin-top: 60px; }
.meta-a { width: 120px; margin-right: 76px; }
.meta-b { width: 116px; margin-right: 56px; }
.meta-c { width: 120px; }
```
